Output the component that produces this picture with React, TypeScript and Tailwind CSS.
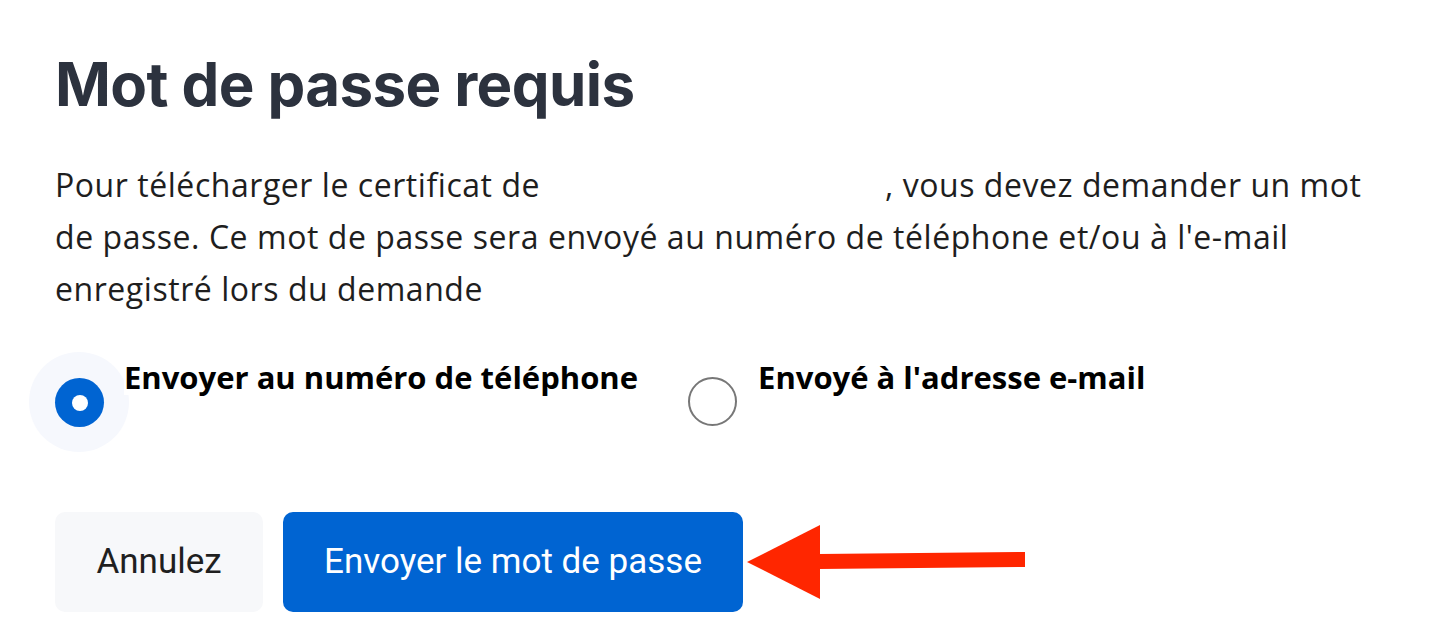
import React from "react"

function ArrowMark() {
  return (
    <svg width="285" height="78" viewBox="0 0 285 78" className="ml-[1px] shrink-0">
      <polygon points="3,39 76,2 76,76" fill="#ff2600" />
      <polygon points="75,31 281,29 281,44 75,46" fill="#ff2600" />
    </svg>
  )
}

export default function App() {
  return (
    <div className="min-h-screen bg-white pl-[55px] pt-[48px]">
      <h1 className="font-['Inter',sans-serif] text-[60px] font-bold leading-[72px] tracking-[-0.6px] text-[#2c323e]">
        Mot de passe requis
      </h1>

      <p className="mt-[39px] font-['Open_Sans',sans-serif] text-[32px] leading-[52px] tracking-[0.55px] text-[#1e1e1e]">
        Pour télécharger le certificat de <span className="inline-block w-[336px]" />, vous devez demander un mot
        <br />
        de passe. Ce mot de passe sera envoyé au numéro de téléphone et/ou à l'e-mail
        <br />
        enregistré lors du demande
      </p>

      <div className="mt-[44px] flex items-start font-['Open_Sans',sans-serif]">
        <label className="flex items-start">
          <span className="relative mt-[19px] h-[49px] w-[49px] shrink-0">
            <span className="absolute left-[-26px] top-[-26px] h-[100px] w-[100px] rounded-full bg-[#f6f8fd]" />
            <span className="absolute inset-0 flex items-center justify-center rounded-full bg-[#0064d2]">
              <span className="h-[16px] w-[16px] rounded-full bg-white" />
            </span>
          </span>
          <span className="relative ml-[20px] bg-white text-[31px] font-bold leading-[36px] text-black">
            Envoyer au numéro de téléphone
          </span>
        </label>

        <label className="ml-[50px] flex items-start">
          <span className="mt-[18px] h-[49px] w-[49px] shrink-0 rounded-full border-2 border-[#777777] bg-white" />
          <span className="ml-[21px] text-[31px] font-bold leading-[36px] text-black">
            Envoyé à l'adresse e-mail
          </span>
        </label>
      </div>

      <div className="mt-[85px] flex items-center">
        <button className="h-[100px] w-[208px] rounded-[10px] bg-[#f7f8fa] font-['Roboto',sans-serif] text-[35px] text-[#1f1f1f]">
          Annulez
        </button>
        <button className="ml-[20px] h-[100px] w-[460px] rounded-[10px] bg-[#0064d2] font-['Roboto',sans-serif] text-[35px] text-white">
          Envoyer le mot de passe
        </button>
        <ArrowMark />
      </div>
    </div>
  )
}
